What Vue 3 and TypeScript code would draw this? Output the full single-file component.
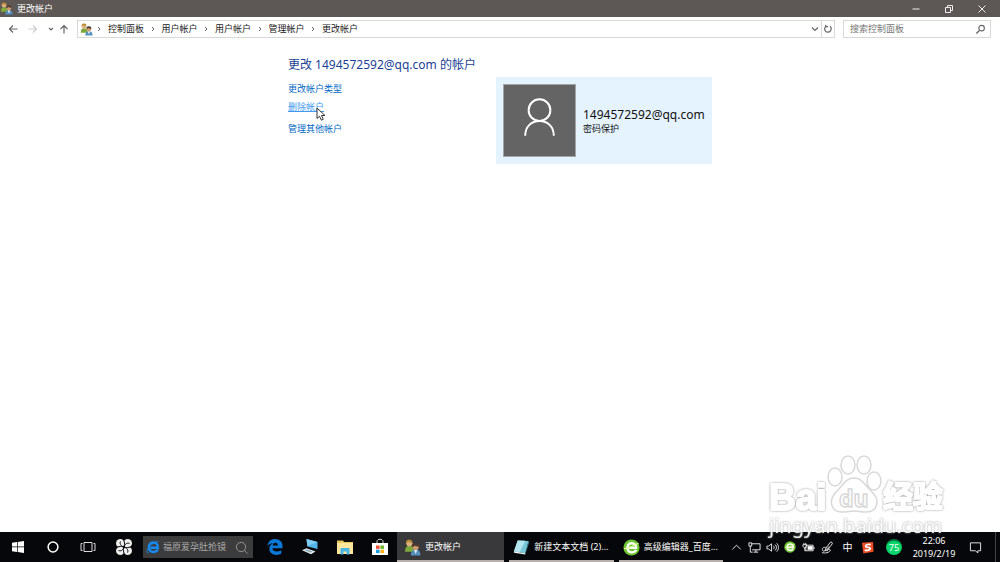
<script setup lang="ts">
import { ref } from 'vue'

const account = '1494572592@qq.com'
const crumbs: string[] = ['控制面板', '用户帐户', '用户帐户', '管理帐户', '更改帐户']
const query = ref('')
const taskQuery = ref('')
</script>

<template>
  <div class="desktop">
    <svg class="defs" aria-hidden="true">
      <defs>
        <symbol id="users" viewBox="0 0 16 16">
          <path d="M1 12c0-4 1-5.500 4-5.500S9.500 8 9.500 12z" fill="#7fa83c" />
          <circle cx="5" cy="4" r="2.900" fill="#dcb184" />
          <path d="M2 4C1.600 1.500 3.400.3 5.200.6 7.300.7 8.300 2.300 7.800 3.500 6 3.600 4.500 2.600 3.800 2.500 3.300 3.600 2.800 4 2 4z" fill="#b78a35" />
          <path d="M6.500 15.500c0-4 1.500-5.500 4.500-5.500s4.500 1.500 4.500 5.500z" fill="#5790bd" />
          <path d="M9.500 10.200 11 14l1.500-3.800z" fill="#e9f2fa" />
          <circle cx="11" cy="7.500" r="2.900" fill="#ce9870" />
          <path d="M8 7.200C7.700 4.800 9 4 11 4s3.300 1 3 3.200C12.500 7 11 6.500 10 6 9.500 7 9 7.300 8 7.200z" fill="#4d382c" />
        </symbol>
        <symbol id="greenE" viewBox="0 0 16 16">
          <circle cx="8" cy="8" r="7.600" fill="#6cc52e" />
          <path d="M12.300 10.300C11.300 13 6 13.500 4.600 10.400 3 6.500 5.500 4 8 4c3 0 4.500 2 4.400 4.400H5.500" fill="none" stroke="#fff" stroke-width="2.200" />
          <path d="M1 9C5 9.500 12 5 14.600 4" fill="none" stroke="#e9ff9b" stroke-width="1" />
        </symbol>
        <symbol id="lens" viewBox="0 0 12 12">
          <circle cx="7.200" cy="4.500" r="3" fill="none" stroke="currentColor" stroke-width="1.200" />
          <path d="M5 6.800 1.500 10.300" stroke="currentColor" stroke-width="1.400" />
        </symbol>
      </defs>
    </svg>

    <header class="titlebar">
      <svg class="i12"><use href="#users" /></svg>
      <span class="title">更改帐户</span>
      <div class="winbtns">
        <button aria-label="最小化"><svg viewBox="0 0 10 10"><path d="M1.500 5h7" /></svg></button>
        <button aria-label="还原"><svg viewBox="0 0 10 10"><path d="M1.500 3.500h5v5h-5zM3.500 3.500v-2h5v5h-2" /></svg></button>
        <button aria-label="关闭"><svg viewBox="0 0 10 10"><path d="m1.500 1.500 7 7m0-7-7 7" /></svg></button>
      </div>
    </header>

    <nav class="navbar">
      <div class="arrows">
        <button aria-label="后退"><svg viewBox="0 0 10 10"><path d="M9.500 5h-8M5 1.500 1.500 5 5 8.500" /></svg></button>
        <button aria-label="前进" class="off"><svg viewBox="0 0 10 10"><path d="M.5 5h8M5 1.500 8.500 5 5 8.500" /></svg></button>
        <button aria-label="最近" class="recent"><svg viewBox="0 0 10 10"><path d="m3 4 2 2 2-2" /></svg></button>
        <button aria-label="向上"><svg viewBox="0 0 10 10"><path d="M5 9.500v-8M1.500 5 5 1.500 8.500 5" /></svg></button>
      </div>
      <div class="address">
        <svg class="i12"><use href="#users" /></svg>
        <svg class="sep first" viewBox="0 0 6 8"><path d="m2 2 2 2-2 2" /></svg>
        <div class="crumbs">
          <template v-for="(c, i) in crumbs" :key="i">
            <svg v-if="i" class="sep" viewBox="0 0 6 8"><path d="m2 2 2 2-2 2" /></svg>
            <button>{{ c }}</button>
          </template>
        </div>
        <button class="drop" aria-label="展开"><svg viewBox="0 0 10 10"><path d="M2 3.500 5 6.500l3-3" /></svg></button>
        <button class="refresh" aria-label="刷新"><svg viewBox="0 0 10 10"><path d="M3 2.200A3.300 3.300 0 1 0 7 2.300M2.500.8l.6 2 2-.5" /></svg></button>
      </div>
      <label class="search">
        <input v-model="query" type="text" placeholder="搜索控制面板" aria-label="搜索控制面板" />
        <svg class="lens"><use href="#lens" /></svg>
      </label>
    </nav>

    <main class="content">
      <section class="actions">
        <h1>更改 {{ account }} 的帐户</h1>
        <a href="#type">更改帐户类型</a>
        <a href="#delete" class="hover">删除帐户
          <svg class="cursor" viewBox="0 0 10 14"><path d="M1 1v10.500l2.500-2.300 1.900 4 1.900-.9-1.800-3.800H9z" /></svg>
        </a>
        <a href="#other" class="other">管理其他帐户</a>
      </section>
      <section class="card">
        <div class="avatar">
          <svg viewBox="0 0 72 72"><circle cx="36" cy="25.500" r="11" /><path d="M21.500 51.500C21.500 42 28 36.500 36 36.500S50.500 42 50.500 51.500" /></svg>
        </div>
        <div class="who"><strong>{{ account }}</strong><span>密码保护</span></div>
      </section>
    </main>

    <footer class="taskbar">
      <div class="launch">
        <button aria-label="开始"><svg viewBox="0 0 16 16"><path d="M2 3.700 7 3v4.600H2zM7.700 2.900 14 2v5.600H7.700zM2 8.300h5V13l-5-.7zM7.700 8.300H14V14l-6.300-.9z" fill="#fff" /></svg></button>
        <button aria-label="Cortana"><svg viewBox="0 0 16 16"><circle cx="8" cy="8" r="4.900" fill="none" stroke="#fff" stroke-width="1.500" /></svg></button>
        <button aria-label="任务视图"><svg viewBox="0 0 16 16"><path d="M4 3.500h8v9H4zM2.500 4.500H1v7h1.500M13.500 4.500H15v7h-1.500" fill="none" stroke="#ddd" /></svg></button>
      </div>
      <button class="fan" aria-label="浏览器">
        <svg viewBox="0 0 18 18">
          <g fill="#eee">
            <circle cx="5.300" cy="5.300" r="4.300" /><circle cx="12.700" cy="5.300" r="4.300" /><circle cx="12.700" cy="12.700" r="4.300" /><circle cx="5.300" cy="12.700" r="4.300" />
          </g>
          <g fill="none" stroke="#09090c" stroke-width="1">
            <path d="M9 9C10.500 5.500 9 2 7.500.5M9 9c3.500 1.500 7 0 8.500-1.500M9 9c-1.500 3.500 0 7 1.500 8.500M9 9C5.500 7.500 2 9 .5 10.500" />
            <path d="M9 9C5.500 8 4.500 5.500 5.500 3.500M9 9c1-3.500 3.500-4.500 5.500-3.500M9 9c3.500 1 4.500 3.500 3.500 5.500M9 9c-1 3.500-3.500 4.500-5.500 3.500" />
          </g>
        </svg>
      </button>
      <label class="tasksearch">
        <svg class="ie" viewBox="0 0 16 16">
          <path d="M13.500 10.800C12 14.800 4.800 14.800 3.500 10 2.200 5.500 5.200 2.800 8.300 2.800c3.700 0 5.500 2.700 5.300 6H5" fill="none" stroke="#168af0" stroke-width="2.700" />
          <path d="M3 14.500C-.5 15.500 1 10 5 6.500S13.500.5 14.500 2.500" fill="none" stroke="#168df2" stroke-width="1" />
        </svg>
        <input v-model="taskQuery" type="text" placeholder="福原爱孕肚抢镜" aria-label="搜索" />
        <svg class="tlens" viewBox="0 0 14 14"><circle cx="6.500" cy="6.500" r="5" /><path d="m10 10 3.500 3.500" /></svg>
      </label>
      <div class="pinned">
        <button aria-label="Edge"><svg viewBox="0 0 18 18"><path d="M1.500 8C2 3.500 5 1 9 1c4.800 0 7.500 3 7.500 7v2.300H6.500c.2 3.700 5 4.200 8.800 2v3.500c-5 2.500-12 .8-12-5C3.300 8 5 6 7.300 5 4.500 5.300 2.500 6.500 1.500 8zm5.200-.5h5.100c0-4-4.900-3.500-5.100 0z" fill="#0b78d7" /></svg></button>
        <button aria-label="此电脑"><svg viewBox="0 0 18 18"><path d="m5.500 1 11 3v7L6.500 8.500z" fill="#55b3ec" /><path d="m5.500 1 11 3-10.200 4z" fill="#80cbf4" /><path d="m1 12.300 4.500-2 9 3.200-4.500 2.800z" fill="#dceaf1" /><path d="m3.500 12.300 2-.9 6 2.200-1.700 1z" fill="#8ba3ae" /></svg></button>
        <button aria-label="文件资源管理器"><svg viewBox="0 0 18 18"><path d="M1 2.500h6L8.200 4H17v12H1z" fill="#eac65d" /><path d="M1 5h16v11H1z" fill="#ffe69c" /><path d="M4.500 16.500V10h9v6.500h-3v-3h-3v3z" fill="#4bb5e5" /></svg></button>
        <button aria-label="应用商店"><svg viewBox="0 0 18 18"><path d="M6 5V3.500C6 .5 12 .5 12 3.500V5" fill="none" stroke="#ddd" /><path d="M1 5h16v12H1z" fill="#fff" /><path d="M5 7.500h3.600v3.400H5z" fill="#ee5135" /><path d="M9.400 7.500H13v3.400H9.400z" fill="#70b52c" /><path d="M5 11.700h3.600v3.400H5z" fill="#189cdc" /><path d="M9.400 11.700H13v3.400H9.400z" fill="#fbb416" /></svg></button>
      </div>
      <div class="tasks">
        <button class="task active"><svg class="i18"><use href="#users" /></svg><span>更改帐户</span></button>
        <button class="task"><svg class="i18" viewBox="0 0 18 18"><path d="M5 1.500 16.500 2l-3.500 13L1 13z" fill="#77c6d8" /><path d="m5 1.500 8 .3-6 12.200-6-1z" fill="#b3e6ee" /><path d="m1 13 12 2v1.500L1 14.500z" fill="#eef5f5" /><path d="m16.500 2 .8 1-4.300 13.500V15z" fill="#418596" /></svg><span>新建文本文档 (2)...</span></button>
        <button class="task"><svg class="i18"><use href="#greenE" /></svg><span>高级编辑器_百度...</span></button>
      </div>
      <div class="tray">
        <button aria-label="显示隐藏的图标"><svg viewBox="0 0 14 14"><path d="m2.500 9 4.500-4.500L11.500 9" /></svg></button>
        <button aria-label="网络"><svg viewBox="0 0 14 14"><path d="M4 3h9v6.500H4.500M8.500 9.500V12M6 12h5M1 2v3.500h3V2zM2.500 5.500V12H5" /></svg></button>
        <button aria-label="音量"><svg viewBox="0 0 14 14"><path d="M1 5.500h1.800L6 3v8L2.800 8.500H1zM8 5.200c1 1 1 2.600 0 3.600M9.800 3.800c2 2 2 4.400 0 6.400M11.500 2.500c2.600 2.500 2.600 6.500 0 9" /></svg></button>
        <button aria-label="安全浏览器"><svg class="i11"><use href="#greenE" /></svg></button>
        <button aria-label="电池"><svg viewBox="0 0 14 14"><path d="M4.500 4.500H12v6H4zM13 6.500v2M2 2v2M4 2v2M1 4h4v2L3 7.500 1 6zM3 7v3.500h1" /><path d="M6 5.500h5.500v4H6z" fill="#fff" stroke="none" /></svg></button>
        <button aria-label="手写笔"><svg viewBox="0 0 14 14"><path d="m5 8 5-6.500c1-1 3 .5 2 1.700L7 9.500l-2.500 1zM5 7C2 6 .5 9 2 10.500S6 9 8.500 6M1 12.500c3 1 8.500 0 9-2.500 0-1.800-3-1.500-3.500 1" /></svg></button>
        <button class="ime">中</button>
        <button aria-label="搜狗"><svg viewBox="0 0 14 14"><path d="m1 2 12-1 .5 10.500-11 2z" fill="#ef4c23" stroke="none" /><path d="M10.500 4C7 3.300 4.700 4.200 5 6c.5 1.500 4.800 0 5 2 .2 2-3.500 2.300-6 1.800" stroke="#fff" stroke-width="1.900" /></svg></button>
        <button class="score">75</button>
      </div>
      <button class="clock"><span>22:06</span><span>2019/2/19</span></button>
      <button class="note" aria-label="通知"><svg viewBox="0 0 14 14"><path d="M1.500 2h11v8.500h-3V13L7 10.500H1.500z" /></svg></button>
      <button class="peek" aria-label="显示桌面"></button>
    </footer>

    <svg class="watermark" viewBox="0 0 184 90" aria-hidden="true">
      <text class="solid bai" x="3" y="57">Bai</text>
      <g class="line">
        <ellipse cx="69" cy="24" rx="7" ry="9" /><ellipse cx="82" cy="12" rx="7" ry="9" /><ellipse cx="98" cy="12" rx="7" ry="9" /><ellipse cx="108" cy="28" rx="7" ry="9" />
        <path d="M88 25c9 0 11 8 18 14 9 9 5 20-6 20-5 0-8-1-12-1s-7 1-12 1c-11 0-14-11-6-20 7-6 9-14 18-14z" />
        <text class="du" x="73" y="54">du</text>
      </g>
      <text class="solid jy" x="117" y="54">经验</text>
      <text class="url" x="3" y="80">jingyan.baidu.com</text>
    </svg>
  </div>
</template>

<style>
body { margin: 0; }
</style>

<style scoped>
* { box-sizing: border-box; }
.desktop {
  position: relative; display: flex; flex-direction: column; min-height: 100vh; overflow: hidden;
  background: #fff; color: #222; font: 9px/12px "Noto Sans", "Noto Sans CJK SC", sans-serif;
}
.defs { position: absolute; width: 0; height: 0; }
button { padding: 0; border: 0; background: none; color: inherit; font: inherit; display: flex; align-items: center; justify-content: center; white-space: nowrap; }
input { min-width: 0; padding: 0; border: 0; outline: 0; background: none; color: inherit; font: inherit; }
svg { display: block; flex: none; }
.i12 { width: 13px; height: 13px; }
.i18 { width: 17px; height: 17px; }

.titlebar { display: flex; align-items: center; height: 17px; background: #5d5855; color: #fff; }
.title { margin-left: 4px; }
.winbtns { display: flex; margin-left: auto; margin-right: 2px; }
.winbtns button { width: 33px; height: 16px; }
.winbtns svg { width: 10px; height: 10px; fill: none; stroke: #eee; }

.navbar { display: flex; align-items: center; height: 24px; padding: 0 9px 0 6px; }
.arrows { display: flex; align-items: center; width: 71px; color: #666; }
.arrows button { width: 16px; height: 18px; margin-right: 6px; }
.arrows .recent { width: 10px; margin-right: 1px; }
.arrows svg { width: 10px; height: 10px; fill: none; stroke: currentColor; stroke-width: 1.2; }
.arrows .off { color: #ccc; }
.address { display: flex; align-items: center; flex: 1; height: 18px; padding-left: 2px; border: 1px solid #d9d9d9; }
.sep { width: 6px; height: 8px; fill: none; stroke: #666; }
.first { margin: 0 6px 0 3px; }
.crumbs { display: flex; justify-content: space-between; align-items: center; width: 250px; }
.drop { margin-left: auto; width: 12px; height: 16px; }
.refresh { width: 13px; height: 16px; border-left: 1px solid #d9d9d9; }
.drop svg, .refresh svg { width: 10px; height: 10px; fill: none; stroke: #666; stroke-width: 1.2; }
.search { display: flex; align-items: center; width: 148px; height: 18px; margin-left: 8px; padding: 0 4px 0 6px; border: 1px solid #d9d9d9; }
.search input { flex: 1; }
.search input::placeholder { color: #757575; opacity: 1; }
.lens { width: 11px; height: 11px; color: #666; }

.content { flex: 1; display: flex; align-items: flex-start; padding: 15px 0 0 288px; }
.actions { display: flex; flex-direction: column; align-items: flex-start; width: 208px; }
h1 { margin: 0 0 9px; font-size: 12px; line-height: 18px; font-weight: 400; color: #1b3f94; white-space: nowrap; }
.actions a { position: relative; margin-bottom: 6px; color: #0067c4; text-decoration: none; }
.actions .hover { color: #4299ef; text-decoration: underline; }
.actions .other { margin-top: 4px; }
.cursor { position: absolute; left: 28px; top: 6px; width: 10px; height: 14px; fill: #fff; stroke: #333; stroke-width: 1; }
.card { display: flex; align-items: center; width: 216px; margin-top: 21px; padding: 7px; background: #e5f3ff; }
.avatar { flex: none; width: 73px; height: 73px; background: #646464; border: 1px solid #a2a5a8; }
.avatar svg { width: 100%; height: 100%; fill: none; stroke: #fff; stroke-width: 2; }
.who { display: flex; flex-direction: column; margin-left: 7px; color: #111; }
.who strong { font-weight: 400; font-size: 12px; line-height: 16px; }

.taskbar { display: flex; align-items: center; height: 30px; background: #06070a; color: #fff; }
.launch { display: flex; }
.launch button { width: 35px; height: 30px; }
.launch svg { width: 16px; height: 16px; }
.fan { width: 38px; height: 30px; }
.fan svg { width: 18px; height: 18px; }
.tasksearch { display: flex; align-items: center; width: 110px; height: 22px; padding: 0 5px 0 3px; background: #3c3c3d; color: #aaa; }
.ie { width: 14px; height: 14px; margin-right: 3px; }
.tasksearch input { flex: 1; }
.tasksearch input::placeholder { color: #aaa; opacity: 1; }
.tlens { width: 13px; height: 13px; fill: none; stroke: #999; }
.pinned { display: flex; margin-left: 4px; }
.pinned button { width: 35px; height: 30px; }
.pinned svg { width: 18px; height: 18px; }
.tasks { display: flex; flex: 1; align-self: stretch; gap: 5px; min-width: 0; }
.task { flex: 1; justify-content: flex-start; min-width: 0; padding: 2px 4px 0; gap: 4px; border-bottom: 2px solid #b8b0ad; }
.task.active { padding-left: 7px; background: #39393c; }
.tray { display: flex; align-items: center; margin-left: 4px; }
.tray button { width: 19px; height: 30px; }
.tray button:nth-child(-n+4) { width: 18px; }
.tray svg, .note svg { width: 13px; height: 13px; fill: none; stroke: #eee; stroke-width: 1; }
.tray .i11 { width: 12px; height: 12px; stroke: none; }
.tray .ime { width: 21px; font-size: 10px; }
.tray .score { width: 16px; height: 16px; margin-left: 9px; border-radius: 50%; background: #08d66a; border-top: 2px solid #067b42; }
.clock { flex-direction: column; width: 62px; line-height: 13px; margin-left: 1px; }
.note { width: 21px; height: 30px; }
.peek { width: 5px; height: 30px; margin-left: 9px; border-left: 1px solid #444; }

.watermark { position: absolute; right: 50px; bottom: 19px; width: 184px; height: 90px; pointer-events: none; overflow: visible; }
.solid { fill: #fff; stroke: #fff; stroke-width: 2; stroke-linejoin: round; filter: drop-shadow(0 0 1px #999); }
.line { fill: #fff; stroke: #d8d8d8; stroke-width: 1.5; }
.bai { font: bold 37px "Liberation Sans", sans-serif; }
.du { font: bold 23px "Noto Sans", sans-serif; }
.jy { font: bold 30px "Noto Sans CJK SC", sans-serif; }
.url { font: 20px "Noto Sans", sans-serif; fill: #fff; fill-opacity: .9; filter: drop-shadow(0 0 1px #999); }
</style>
